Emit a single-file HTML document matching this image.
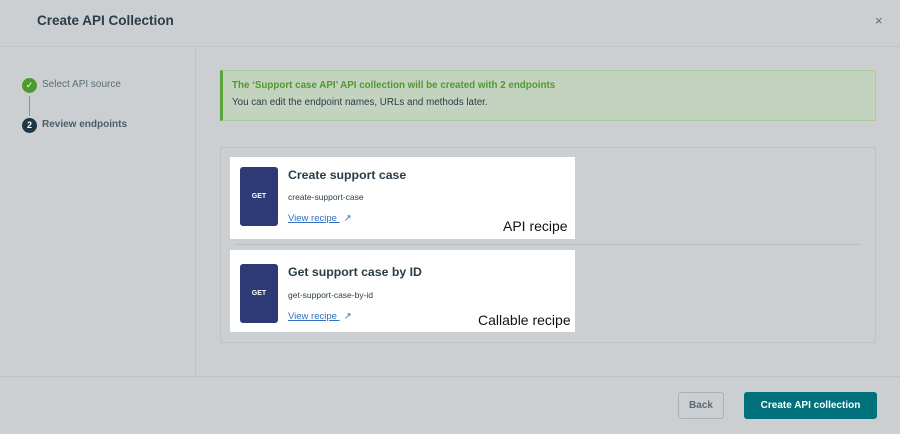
<!DOCTYPE html>
<html><head><style>
*{box-sizing:border-box;margin:0;padding:0}
body{width:900px;height:434px;background:#cbcfd1;font-family:"Liberation Sans",sans-serif;position:relative;overflow:hidden;color:#243b47}
.abs{position:absolute}
</style></head><body>
<div class="abs" style="left:0;top:0;width:900px;height:47px;border-bottom:1px solid #bfc4c7"></div>
<div class="abs" style="left:37px;top:13px;font-size:13.5px;font-weight:bold;color:#2a3d48">Create API Collection</div>
<div class="abs" style="left:875px;top:13px;font-size:13px;color:#5b6b74">×</div>
<div class="abs" style="left:195px;top:48px;width:1px;height:328px;background:#bfc4c7"></div>
<div class="abs" style="left:22px;top:78px;width:15px;height:15px;border-radius:50%;background:#4f9a2e;color:#fff;font-size:9px;text-align:center;line-height:15px">✓</div>
<div class="abs" style="left:42px;top:79px;font-size:10px;color:#5d6d76">Select API source</div>
<div class="abs" style="left:29px;top:96px;width:1px;height:20px;background:#8a979e"></div>
<div class="abs" style="left:22px;top:118px;width:15px;height:15px;border-radius:50%;background:#1f3644;color:#fff;font-size:9px;font-weight:bold;text-align:center;line-height:15px">2</div>
<div class="abs" style="left:42px;top:119px;font-size:10px;font-weight:bold;color:#4c5d67">Review endpoints</div>
<div class="abs" style="left:220px;top:70px;width:656px;height:51px;background:#c4d3bf;border:1px solid #a9cc98;border-left:3px solid #5aa53a"></div>
<div class="abs" style="left:232px;top:80px;font-size:9.8px;font-weight:bold;color:#4f9a2e">The ‘Support case API’ API collection will be created with 2 endpoints</div>
<div class="abs" style="left:232px;top:97px;font-size:9.8px;color:#2a3d48">You can edit the endpoint names, URLs and methods later.</div>
<div class="abs" style="left:220px;top:147px;width:656px;height:196px;border:1px solid #bcc2c5"></div>
<div class="abs" style="left:236px;top:244px;width:624px;height:1px;background:#b8bec1"></div>
<div class="abs" style="left:230px;top:157px;width:345px;height:82px;background:#fff"></div>
<div class="abs" style="left:230px;top:250px;width:345px;height:82px;background:#fff"></div>
<div class="abs" style="left:240px;top:167px;width:38px;height:59px;background:#2e3a76;border-radius:3px;color:#fff;font-size:7px;font-weight:bold;text-align:center;line-height:59px">GET</div>
<div class="abs" style="left:240px;top:264px;width:38px;height:59px;background:#2e3a76;border-radius:3px;color:#fff;font-size:7px;font-weight:bold;text-align:center;line-height:59px">GET</div>
<div class="abs" style="left:288px;top:168px;font-size:12.3px;font-weight:bold;color:#2a3d48">Create support case</div>
<div class="abs" style="left:288px;top:192px;font-size:8.5px;color:#2a3d48">create-support-case</div>
<div class="abs" style="left:288px;top:213px;font-size:9.5px;color:#2f6fc4;text-decoration:underline">View recipe <span style="text-decoration:none;display:inline-block;margin-left:4px">↗</span></div>
<div class="abs" style="left:503px;top:218px;font-size:14px;color:#111">API recipe</div>
<div class="abs" style="left:288px;top:265px;font-size:12.3px;font-weight:bold;color:#2a3d48">Get support case by ID</div>
<div class="abs" style="left:288px;top:290px;font-size:8.5px;color:#2a3d48">get-support-case-by-id</div>
<div class="abs" style="left:288px;top:311px;font-size:9.5px;color:#2f6fc4;text-decoration:underline">View recipe <span style="text-decoration:none;display:inline-block;margin-left:4px">↗</span></div>
<div class="abs" style="left:478px;top:312px;font-size:14px;color:#111">Callable recipe</div>
<div class="abs" style="left:0;top:376px;width:900px;height:1px;background:#bcc2c5"></div>
<div class="abs" style="left:678px;top:392px;width:46px;height:27px;border:1px solid #a9b2b7;border-radius:3px;font-size:10px;font-weight:bold;color:#5b6b74;text-align:center;line-height:25px">Back</div>
<div class="abs" style="left:744px;top:392px;width:133px;height:27px;background:#00707a;border-radius:3px;font-size:10px;font-weight:bold;color:#fff;text-align:center;line-height:27px">Create API collection</div>
</body></html>
